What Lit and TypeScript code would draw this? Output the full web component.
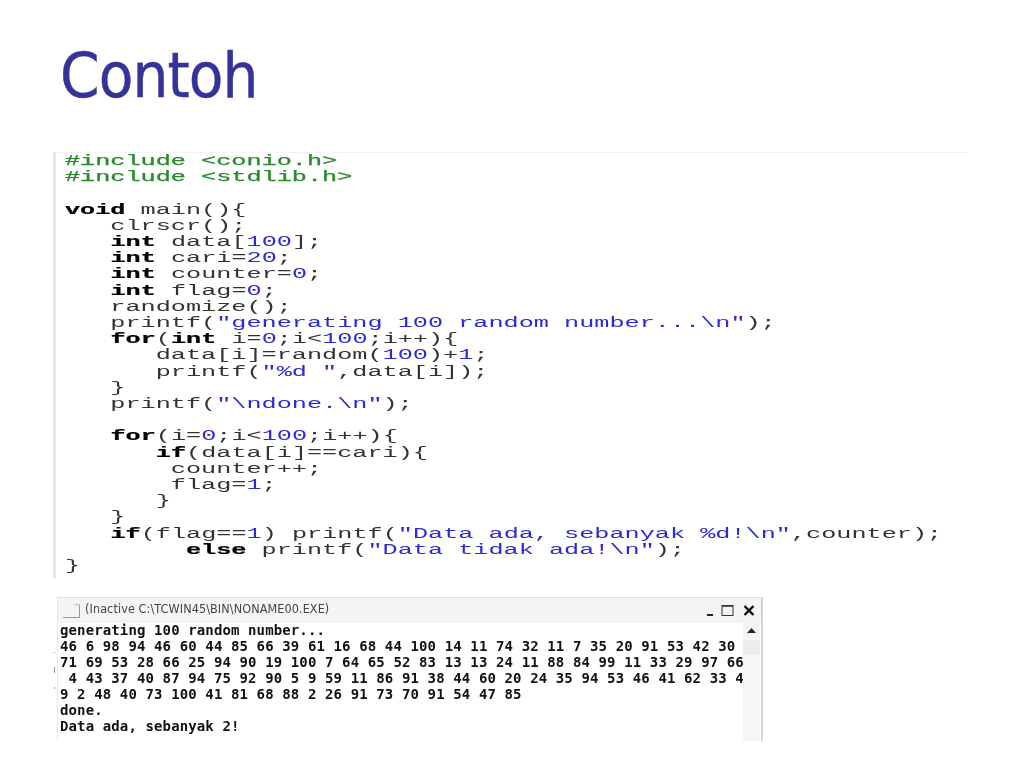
import { LitElement, html, css } from "lit";
import { customElement } from "lit/decorators.js";

@customElement("app-root")
export class AppRoot extends LitElement {
  static styles = css`
    :host { display: block; width: 1024px; height: 768px; background: #fff; overflow: hidden; position: relative; }
    h1 { margin: 0; padding: 36px 0 0 60px; height: 152px; box-sizing: border-box; font: 400 63px/80px "DejaVu Sans", sans-serif; font-stretch: condensed; color: #333399; letter-spacing: -0.9px; -webkit-text-stroke: 0.4px #333399; }
    .code { margin-left: 53px; width: 915px; height: 426px; box-sizing: border-box; border-left: 3px solid #e6e6e6; border-top: 1px solid #f4f4f4; padding: 0 0 0 9px; }
    pre { margin: 0; padding-top: 0; font: 400 14px/16.2px "Liberation Mono", monospace; color: #333; transform: scaleX(1.8); transform-origin: 0 0; filter: blur(0.35px); }
    .k { font-weight: 700; color: #000; -webkit-text-stroke: 0.2px #000; }
    .s { color: #2a2ad8; }
    .p { color: #2a8a2a; -webkit-text-stroke: 0.25px #2a8a2a; }
    .win { margin: 19px 0 0 57px; width: 706px; height: 144px; box-sizing: border-box; border-top: 1px solid #e0e0e0; border-left: 1px solid #e8e8e8; border-right: 2px solid #d4d4d4; display: flex; flex-direction: column; }
    .bar { height: 25px; flex: none; background: #f4f4f4; display: flex; align-items: center; padding: 0 4px 0 4px; gap: 4px; }
    .bar svg { flex: none; }
    .title { flex: 1; font: 400 12.5px/14px "DejaVu Sans", sans-serif; font-stretch: condensed; letter-spacing: 0.1px; color: #444; filter: blur(0.25px); padding-bottom: 3px; }
    .ctrls { display: flex; gap: 0; align-items: center; }
    .ctrls svg + svg { margin-left: 2px; }
    .ctrls svg:last-child { margin-left: 6px; }
    .body { flex: 1; display: flex; min-height: 0; }
    pre.out { flex: 1; margin: 0; padding: 0 0 0 2px; font: 700 14px/16px "DejaVu Sans Mono", monospace; letter-spacing: 0.12px; color: #111; filter: blur(0.3px); overflow: hidden; transform: none; position: relative; top: -1px; }
    .sb { width: 17px; flex: none; display: flex; flex-direction: column; background: #f6f6f6; margin-right: 1px; }
    .up { height: 15px; background: #f2f2f2; display: flex; align-items: center; justify-content: center; margin-bottom: 2px; }
    .thumb { height: 15px; background: #ececec; box-sizing: border-box; }
    .speck { position: absolute; background: #8a8ac8; width: 1px; }
    .dot { background: #999; }
  `;

  render() {
    const k = (t: string) => html`<span class="k">${t}</span>`;
    const s = (t: string) => html`<span class="s">${t}</span>`;
    const p = (t: string) => html`<span class="p">${t}</span>`;
    const lines = [
      html`${p("#include <conio.h>")}`,
      html`${p("#include <stdlib.h>")}`,
      html``,
      html`${k("void")} main(){`,
      html`   clrscr();`,
      html`   ${k("int")} data[${s("100")}];`,
      html`   ${k("int")} cari=${s("20")};`,
      html`   ${k("int")} counter=${s("0")};`,
      html`   ${k("int")} flag=${s("0")};`,
      html`   randomize();`,
      html`   printf(${s('"generating 100 random number...\\n"')});`,
      html`   ${k("for")}(${k("int")} i=${s("0")};i&lt;${s("100")};i++){`,
      html`      data[i]=random(${s("100")})+${s("1")};`,
      html`      printf(${s('"%d "')},data[i]);`,
      html`   }`,
      html`   printf(${s('"\\ndone.\\n"')});`,
      html``,
      html`   ${k("for")}(i=${s("0")};i&lt;${s("100")};i++){`,
      html`      ${k("if")}(data[i]==cari){`,
      html`       counter++;`,
      html`       flag=${s("1")};`,
      html`      }`,
      html`   }`,
      html`   ${k("if")}(flag==${s("1")}) printf(${s('"Data ada, sebanyak %d!\\n"')},counter);`,
      html`        ${k("else")} printf(${s('"Data tidak ada!\\n"')});`,
      html`}`,
    ];
    const out = [
      "generating 100 random number...",
      "46 6 98 94 46 60 44 85 66 39 61 16 68 44 100 14 11 74 32 11 7 35 20 91 53 42 30",
      "71 69 53 28 66 25 94 90 19 100 7 64 65 52 83 13 13 24 11 88 84 99 11 33 29 97 66",
      " 4 43 37 40 87 94 75 92 90 5 9 59 11 86 91 38 44 60 20 24 35 94 53 46 41 62 33 4",
      "9 2 48 40 73 100 41 81 68 88 2 26 91 73 70 91 54 47 85",
      "done.",
      "Data ada, sebanyak 2!",
    ];
    return html`
      <h1>Contoh</h1>
      <div class="code"><pre>${lines.map((l) => html`${l}${"\n"}`)}</pre></div>
      <div class="win">
        <div class="bar">
          <svg width="19" height="16" viewBox="0 0 19 16">
            <path d="M1 14.5H17.5V1.5" fill="none" stroke="#9a9a9a"/>
            <path d="M12.5 1.5H17.5" fill="none" stroke="#c4c4c4"/>
            <path d="M1 14.5V14M15 .5V4" fill="none" stroke="#d0d0d0"/>
          </svg>
          <div class="title">(Inactive C:\\TCWIN45\\BIN\\NONAME00.EXE)</div>
          <div class="ctrls">
            <svg width="14" height="16" viewBox="0 0 14 16"><rect x="3" y="11" width="6" height="2" fill="#222"/></svg>
            <svg width="15" height="16" viewBox="0 0 15 16"><rect x="2" y="2.5" width="11" height="10" fill="none" stroke="#333"/><path d="M2 3H13" stroke="#333" stroke-width="1.5"/></svg>
            <svg width="16" height="16" viewBox="0 0 16 16"><path d="M3.5 3L12.5 12M12.5 3L3.5 12" stroke="#111" stroke-width="2.4" fill="none"/></svg>
          </div>
        </div>
        <div class="body">
          <pre class="out">${out.join("\n")}</pre>
          <div class="sb">
            <div class="up"><svg width="9" height="5" viewBox="0 0 9 5"><path d="M4.5 0L9 5H0Z" fill="#222"/></svg></div>
            <div class="thumb"></div>
          </div>
        </div>
      </div>
      <div class="speck dot" style="left:54px;top:652px;height:1px"></div>
      <div class="speck" style="left:54px;top:667px;height:6px"></div>
      <div class="speck dot" style="left:54px;top:687px;height:2px"></div>
    `;
  }
}
